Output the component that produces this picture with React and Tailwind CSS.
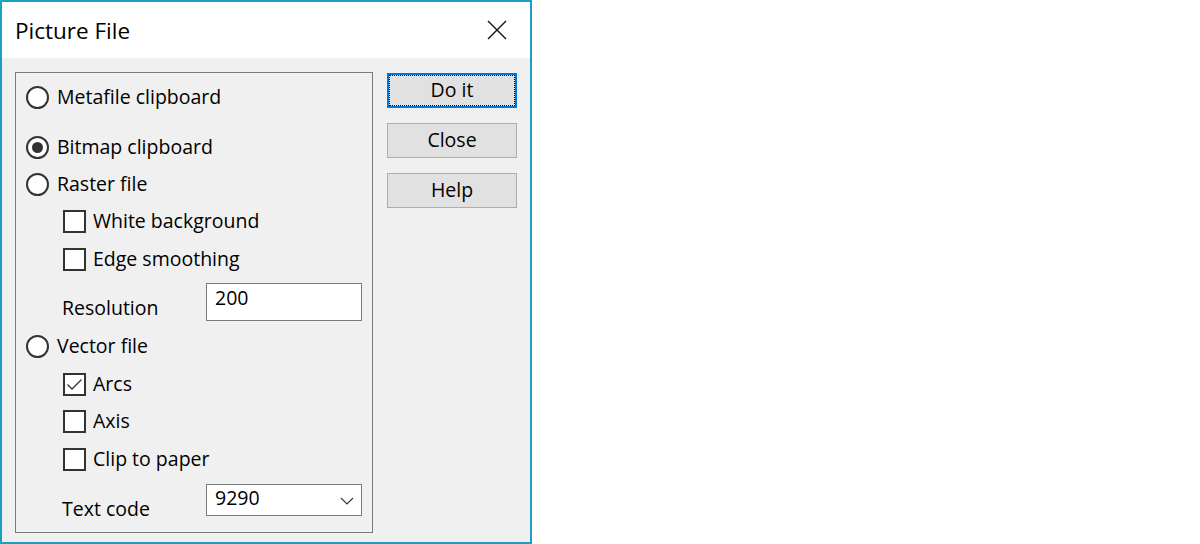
import React from "react";

function Radio({ checked }) {
  return (
    <span className="w-[23px] h-[23px] rounded-full border-2 border-[#333] bg-white flex items-center justify-center shrink-0">
      {checked && <span className="w-[11px] h-[11px] rounded-full bg-[#333]" />}
    </span>
  );
}

function Check({ checked }) {
  return (
    <span className="w-[23px] h-[23px] border-2 border-[#333] bg-white flex items-center justify-center shrink-0">
      {checked && (
        <svg width="19" height="19" viewBox="0 0 19 19">
          <path d="M2.5 9.5 L7 14 L16.5 4.5" fill="none" stroke="#333" strokeWidth="1.3" />
        </svg>
      )}
    </span>
  );
}

function RadioRow({ label, checked, mt }) {
  return (
    <div className={`flex items-center h-[24px] ${mt}`}>
      <Radio checked={checked} />
      <span className="ml-[8px] leading-[24px]">{label}</span>
    </div>
  );
}

function CheckRow({ label, checked, mt }) {
  return (
    <div className={`flex items-center h-[24px] ml-[37px] ${mt}`}>
      <Check checked={checked} />
      <span className="ml-[7px] leading-[24px]">{label}</span>
    </div>
  );
}

function Button({ children, focused }) {
  return (
    <div
      className={
        focused
          ? "w-[130px] h-[35px] bg-[#e1e1e1] border-2 border-[#0078d7] flex items-center justify-center outline-1 outline-dotted outline-black outline-offset-[-3px]"
          : "w-[130px] h-[35px] bg-[#e1e1e1] border border-[#adadad] flex items-center justify-center"
      }
    >
      <span className="leading-[24px] -mt-[2px]">{children}</span>
    </div>
  );
}

export default function App() {
  return (
    <div className="w-[1200px] h-[544px] bg-white font-['Open_Sans',sans-serif] text-black text-[19.5px]">
      <div className="w-[532px] h-[544px] border-2 border-[#1b9fc6] flex flex-col">
        <div className="h-[56px] bg-white flex items-center justify-between pl-[13px] pr-[23px]">
          <span className="text-[22.5px] leading-[28px] mt-[1px]">Picture File</span>
          <svg width="20" height="20" viewBox="0 0 20 20" className="-mt-[1px]">
            <path d="M1 1 L19 19 M19 1 L1 19" stroke="#111" strokeWidth="1.4" fill="none" />
          </svg>
        </div>
        <div className="flex-1 bg-[#f0f0f0] flex pl-[13px] pt-[14px]">
          <div className="w-[358px] h-[461px] border border-[#7a7a7a] pl-[10px] flex flex-col">
            <RadioRow label="Metafile clipboard" mt="mt-[12px]" />
            <RadioRow label="Bitmap clipboard" checked mt="mt-[26px]" />
            <RadioRow label="Raster file" mt="mt-[13px]" />
            <CheckRow label="White background" mt="mt-[13px]" />
            <CheckRow label="Edge smoothing" mt="mt-[14px]" />
            <div className="flex items-start mt-[12px] ml-[36px]">
              <span className="w-[144px] leading-[24px] mt-[13px]">Resolution</span>
              <div className="w-[156px] h-[38px] bg-white border border-[#7a7a7a] pl-[8px] pt-[2px] leading-[24px]">
                200
              </div>
            </div>
            <RadioRow label="Vector file" mt="mt-[13px]" />
            <CheckRow label="Arcs" checked mt="mt-[14px]" />
            <CheckRow label="Axis" mt="mt-[13px]" />
            <CheckRow label="Clip to paper" mt="mt-[14px]" />
            <div className="flex items-start mt-[13px] ml-[36px]">
              <span className="w-[144px] leading-[24px] mt-[13px]">Text code</span>
              <div className="w-[156px] h-[32px] bg-white border border-[#7a7a7a] pl-[8px] pr-[7px] pt-[1px] flex items-start justify-between leading-[24px]">
                <span>9290</span>
                <svg width="14" height="8" viewBox="0 0 14 8" className="mt-[11px]">
                  <path d="M1 1 L7 7 L13 1" stroke="#333" strokeWidth="1.1" fill="none" />
                </svg>
              </div>
            </div>
          </div>
          <div className="ml-[14px] pt-[1px] flex flex-col gap-[15px]">
            <Button focused>Do it</Button>
            <Button>Close</Button>
            <Button>Help</Button>
          </div>
        </div>
      </div>
    </div>
  );
}
